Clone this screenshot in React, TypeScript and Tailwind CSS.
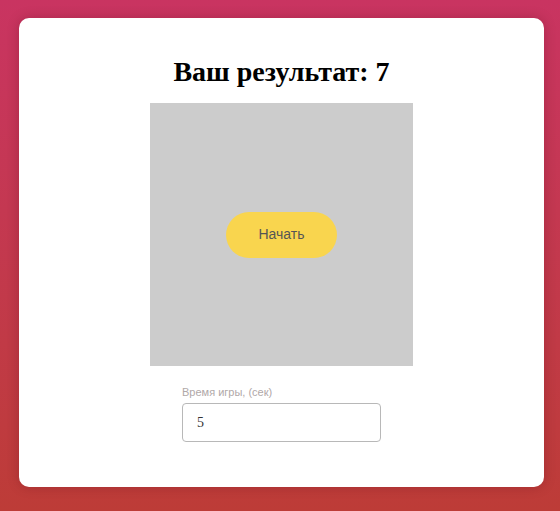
export default function App() {
  return (
    <div className="min-h-screen w-full bg-gradient-to-b from-[#c93461] to-[#bd3c37] pt-[18px] pb-[24px] pl-[19px] pr-[16px]">
      <div className="flex w-[525px] h-[469px] flex-col items-center rounded-[10px] bg-white pt-[38px] shadow-[0_0_12px_rgba(80,0,20,0.25)]">
        <h1 className="text-[28px] font-bold leading-[32px] text-black" style={{ fontFamily: '"Liberation Serif", "Times New Roman", serif' }}>
          Ваш результат: 7
        </h1>
        <div className="mt-[15px] flex h-[263px] w-[263px] items-center justify-center bg-[#cccccc]">
          <button className="h-[46px] w-[111px] rounded-full bg-[#f9d54e] text-[14px] text-[#555555]" style={{ fontFamily: '"Liberation Sans", Arial, sans-serif' }}>
            Начать
          </button>
        </div>
        <div className="mt-[19px] flex w-[199px] flex-col">
          <label className="text-[11px] leading-[14px] text-[#b0a8a8]" style={{ fontFamily: '"Liberation Sans", Arial, sans-serif' }}>
            Время игры, (сек)
          </label>
          <input
            type="number"
            defaultValue={5}
            className="mt-[4px] h-[39px] w-[199px] rounded-[4px] border border-[#b8b8b8] px-[14px] text-[14px] text-[#333] outline-none"
            style={{ fontFamily: '"Liberation Serif", "Times New Roman", serif' }}
          />
        </div>
      </div>
    </div>
  );
}
